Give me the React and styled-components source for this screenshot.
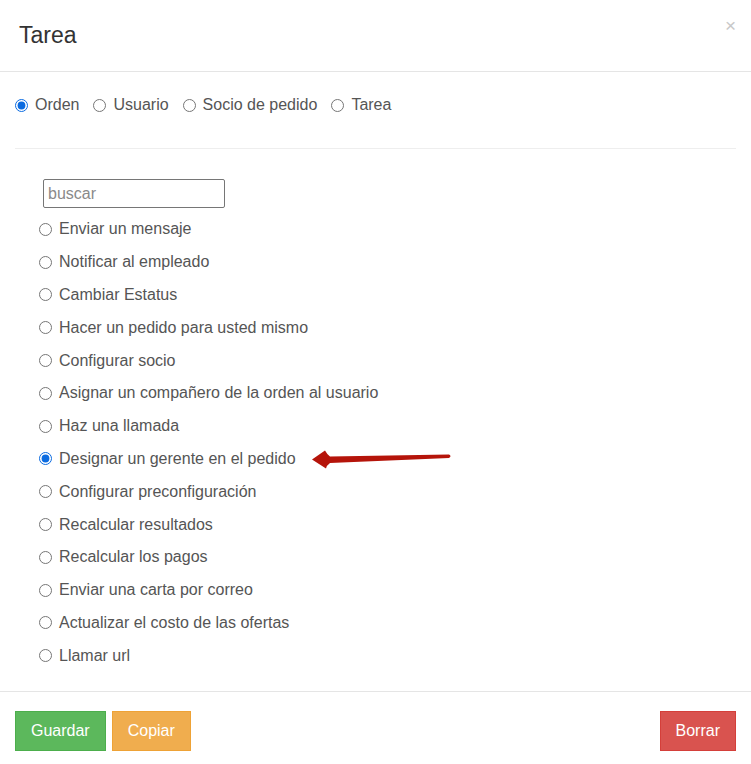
import React from 'react';
import styled, { createGlobalStyle } from 'styled-components';

const GlobalStyle = createGlobalStyle`
  html, body {
    margin: 0;
    padding: 0;
    background: #fff;
  }
  body {
    font-family: "Liberation Sans", Arial, sans-serif;
    color: #555;
  }
  * {
    box-sizing: border-box;
  }
`;

const Modal = styled.div`
  width: 751px;
  height: 764px;
  background: #fff;
  display: flex;
  flex-direction: column;
`;

const Header = styled.div`
  display: flex;
  justify-content: space-between;
  align-items: flex-start;
  padding: 19px 15px 19px 19px;
  border-bottom: 1px solid #e5e5e5;
`;

const Title = styled.h4`
  margin: 0;
  font-size: 23px;
  line-height: 33px;
  font-weight: 400;
  color: #333;
`;

const Close = styled.button`
  border: 0;
  background: none;
  padding: 0;
  margin-top: -3px;
  font-family: "Liberation Sans", Arial, sans-serif;
  font-size: 19px;
  line-height: 20px;
  color: #c8c8c8;
  cursor: pointer;
`;

const Body = styled.div`
  flex: 1;
  padding: 22px 15px 0;
`;

const TypeRow = styled.div`
  display: flex;
  align-items: center;
  gap: 14px;
  height: 22px;
  font-size: 16px;
`;

const Choice = styled.label`
  display: inline-flex;
  align-items: center;
  gap: 7px;
  color: #555;
  cursor: pointer;
`;

const Radio = styled.input.attrs({ type: 'radio' })`
  margin: 0;
  width: 13px;
  height: 13px;
  accent-color: #0b6be0;
`;

const Divider = styled.hr`
  border: 0;
  border-top: 1px solid #eee;
  margin: 32px 0 30px;
`;

const List = styled.div`
  padding-left: 24px;
`;

const Search = styled.input`
  display: block;
  width: 182px;
  height: 29px;
  margin: 0 0 10px 4px;
  padding: 0 4px;
  border: 1px solid #767676;
  border-radius: 2px;
  font-family: "Liberation Sans", Arial, sans-serif;
  font-size: 16px;
  color: #555;
  &::placeholder {
    color: #8a8a8a;
  }
`;

const Item = styled.label`
  display: flex;
  align-items: center;
  gap: 7px;
  height: 22.8px;
  margin-bottom: 10px;
  font-size: 16px;
  color: #555;
  cursor: pointer;
`;

const Arrow = styled.svg`
  margin-left: 6px;
  flex: none;
`;

const Footer = styled.div`
  display: flex;
  align-items: flex-start;
  gap: 6px;
  padding: 19px 15px 13px;
  border-top: 1px solid #e5e5e5;
`;

const tones = {
  success: { bg: '#5cb85c', border: '#4cae4c' },
  warning: { bg: '#f0ad4e', border: '#eea236' },
  danger: { bg: '#d9534f', border: '#d43f3a' },
};

const Button = styled.button`
  height: 40px;
  padding: 0 15px;
  border: 1px solid ${p => tones[p.$tone].border};
  background: ${p => tones[p.$tone].bg};
  color: #fff;
  font-family: "Liberation Sans", Arial, sans-serif;
  font-size: 16px;
  border-radius: 0;
  cursor: pointer;
  margin-left: ${p => (p.$push ? 'auto' : '0')};
`;

const types = ['Orden', 'Usuario', 'Socio de pedido', 'Tarea'];

const actions = [
  'Enviar un mensaje',
  'Notificar al empleado',
  'Cambiar Estatus',
  'Hacer un pedido para usted mismo',
  'Configurar socio',
  'Asignar un compañero de la orden al usuario',
  'Haz una llamada',
  'Designar un gerente en el pedido',
  'Configurar preconfiguración',
  'Recalcular resultados',
  'Recalcular los pagos',
  'Enviar una carta por correo',
  'Actualizar el costo de las ofertas',
  'Llamar url',
];

function PointerArrow() {
  return (
    <Arrow width="145" height="24" viewBox="0 0 145 24">
      <path
        d="M3,12.5 L16,3.5 Q17.5,6.5 21,9.5 L140,7.5 Q143,9 140,11 L21,16 Q17.5,18.5 17,21.5 Z"
        fill="#b5140a"
      />
    </Arrow>
  );
}

export default function App() {
  const [type, setType] = React.useState('Orden');
  const [action, setAction] = React.useState('Designar un gerente en el pedido');

  return (
    <>
      <GlobalStyle />
      <Modal>
        <Header>
          <Title>Tarea</Title>
          <Close aria-label="Cerrar">×</Close>
        </Header>
        <Body>
          <TypeRow>
            {types.map(t => (
              <Choice key={t}>
                <Radio name="type" checked={type === t} onChange={() => setType(t)} />
                {t}
              </Choice>
            ))}
          </TypeRow>
          <Divider />
          <List>
            <Search placeholder="buscar" />
            {actions.map(a => (
              <Item key={a}>
                <Radio name="action" checked={action === a} onChange={() => setAction(a)} />
                {a}
                {a === 'Designar un gerente en el pedido' && <PointerArrow />}
              </Item>
            ))}
          </List>
        </Body>
        <Footer>
          <Button $tone="success">Guardar</Button>
          <Button $tone="warning">Copiar</Button>
          <Button $tone="danger" $push>Borrar</Button>
        </Footer>
      </Modal>
    </>
  );
}
